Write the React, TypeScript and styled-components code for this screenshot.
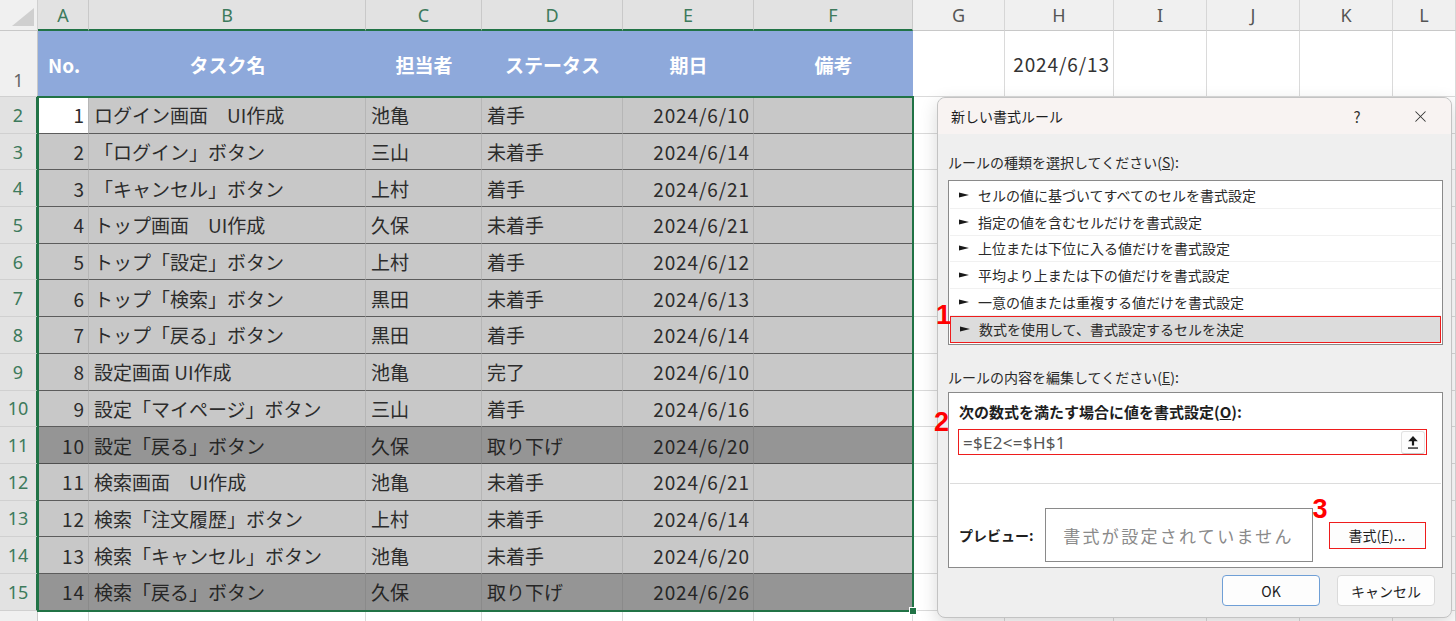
import React from 'react';
import styled, { createGlobalStyle, css } from 'styled-components';
import { X } from 'lucide-react';

const GlobalStyle = createGlobalStyle`
  html, body {
    margin: 0;
    padding: 0;
    background: #ffffff;
  }
  body {
    font-family: "Noto Sans CJK JP", "Noto Sans", sans-serif;
    color: #222;
  }
`;

const COLS = '38px 51px 277px 116px 141px 131px 159px 92px 109px 93px 93px 93px 1fr';
const LETTERS = ['A', 'B', 'C', 'D', 'E', 'F', 'G', 'H', 'I', 'J', 'K', 'L'];
const GREEN = '#217346';

type Task = {
  no: number;
  task: string;
  owner: string;
  status: string;
  due: string;
  dark?: boolean;
};

const tasks: Task[] = [
  { no: 1, task: 'ログイン画面　UI作成', owner: '池亀', status: '着手', due: '2024/6/10' },
  { no: 2, task: '「ログイン」ボタン', owner: '三山', status: '未着手', due: '2024/6/14' },
  { no: 3, task: '「キャンセル」ボタン', owner: '上村', status: '着手', due: '2024/6/21' },
  { no: 4, task: 'トップ画面　UI作成', owner: '久保', status: '未着手', due: '2024/6/21' },
  { no: 5, task: 'トップ「設定」ボタン', owner: '上村', status: '着手', due: '2024/6/12' },
  { no: 6, task: 'トップ「検索」ボタン', owner: '黒田', status: '未着手', due: '2024/6/13' },
  { no: 7, task: 'トップ「戻る」ボタン', owner: '黒田', status: '着手', due: '2024/6/14' },
  { no: 8, task: '設定画面 UI作成', owner: '池亀', status: '完了', due: '2024/6/10' },
  { no: 9, task: '設定「マイページ」ボタン', owner: '三山', status: '着手', due: '2024/6/16' },
  { no: 10, task: '設定「戻る」ボタン', owner: '久保', status: '取り下げ', due: '2024/6/20', dark: true },
  { no: 11, task: '検索画面　UI作成', owner: '池亀', status: '未着手', due: '2024/6/21' },
  { no: 12, task: '検索「注文履歴」ボタン', owner: '上村', status: '未着手', due: '2024/6/14' },
  { no: 13, task: '検索「キャンセル」ボタン', owner: '池亀', status: '未着手', due: '2024/6/20' },
  { no: 14, task: '検索「戻る」ボタン', owner: '久保', status: '取り下げ', due: '2024/6/26', dark: true },
];

const rules = [
  'セルの値に基づいてすべてのセルを書式設定',
  '指定の値を含むセルだけを書式設定',
  '上位または下位に入る値だけを書式設定',
  '平均より上または下の値だけを書式設定',
  '一意の値または重複する値だけを書式設定',
  '数式を使用して、書式設定するセルを決定',
];

/* ---------- sheet ---------- */

const Sheet = styled.div`
  position: relative;
  width: 1456px;
  height: 621px;
  overflow: hidden;
  background: #fff;
`;

const GridRow = styled.div<{ $h: number }>`
  display: grid;
  grid-template-columns: ${COLS};
  grid-template-rows: ${(p) => p.$h}px;
  height: ${(p) => p.$h}px;
`;

const Corner = styled.div`
  background: #f0f0f0;
  border-right: 1px solid #d0d0d0;
  border-bottom: 1px solid #c8c8c8;
  box-sizing: border-box;
  display: flex;
  align-items: flex-end;
  justify-content: flex-end;
  padding: 0 3px 4px 0;
`;

const ColHead = styled.div<{ $sel: boolean }>`
  display: flex;
  align-items: center;
  justify-content: center;
  box-sizing: border-box;
  font-family: "Noto Sans", sans-serif;
  font-size: 18px;
  background: ${(p) => (p.$sel ? '#e2e2e2' : '#f0f0f0')};
  color: ${(p) => (p.$sel ? '#3d7a5c' : '#555')};
  border-right: 1px solid ${(p) => (p.$sel ? '#c9c9c9' : '#d6d6d6')};
  border-bottom: ${(p) => (p.$sel ? `2px solid ${GREEN}` : '1px solid #c8c8c8')};
`;

const RowHead = styled.div<{ $sel: boolean; $bottom?: boolean }>`
  display: flex;
  justify-content: center;
  align-items: ${(p) => (p.$bottom ? 'flex-end' : 'center')};
  padding-bottom: ${(p) => (p.$bottom ? '4px' : '0')};
  box-sizing: border-box;
  font-family: "Noto Sans", sans-serif;
  font-size: 18px;
  background: ${(p) => (p.$sel ? '#e2e2e2' : '#f0f0f0')};
  color: ${(p) => (p.$sel ? '#3d7a5c' : '#666')};
  border-bottom: 1px solid #d0d0d0;
  border-right: ${(p) => (p.$sel ? `2px solid ${GREEN}` : '1px solid #c8c8c8')};
`;

type CellKind = 'title' | 'data' | 'dark' | 'active' | 'blank';

const Cell = styled.div<{ $kind: CellKind; $align?: 'left' | 'right' | 'center'; $num?: boolean }>`
  display: flex;
  align-items: center;
  box-sizing: border-box;
  overflow: hidden;
  white-space: nowrap;
  font-size: 19px;
  padding: 0 5px;
  justify-content: ${(p) =>
    p.$align === 'right' ? 'flex-end' : p.$align === 'center' ? 'center' : 'flex-start'};
  ${(p) =>
    p.$num &&
    css`
      letter-spacing: 0.9px;
      padding-right: 3px;
    `}
  ${(p) => {
    switch (p.$kind) {
      case 'title':
        return css`
          background: #8ea9db;
          color: #fff;
          font-weight: 700;
          padding: 0 10px;
        `;
      case 'data':
        return css`
          background: #c8c8c8;
          color: #2c2c2c;
          border-right: 1px solid #b6b6b6;
          border-bottom: 1px solid #5c5c5c;
        `;
      case 'dark':
        return css`
          background: #959595;
          color: #262626;
          border-right: 1px solid #8a8a8a;
          border-bottom: 1px solid #4f4f4f;
        `;
      case 'active':
        return css`
          background: #fff;
          color: #2c2c2c;
          border-right: 1px solid #b6b6b6;
          border-bottom: 1px solid #5c5c5c;
        `;
      default:
        return css`
          background: #fff;
          color: #333;
          border-right: 1px solid #dadada;
          border-bottom: 1px solid #dadada;
        `;
    }
  }}
`;

const SelectionFrame = styled.div`
  position: absolute;
  left: 37px;
  top: 96px;
  width: 877px;
  height: 516px;
  box-sizing: border-box;
  border: 2px solid ${GREEN};
  pointer-events: none;
`;

const FillHandle = styled.div`
  position: absolute;
  right: -5px;
  bottom: -5px;
  width: 6px;
  height: 6px;
  background: ${GREEN};
  border: 1px solid #fff;
`;

/* ---------- dialog ---------- */

const Dialog = styled.div`
  position: absolute;
  left: 937px;
  top: 97px;
  width: 515px;
  height: 521px;
  box-sizing: border-box;
  background: #efefef;
  border: 1px solid #c3c3c3;
  border-radius: 8px;
  box-shadow: 0 6px 18px rgba(0, 0, 0, 0.16);
  display: flex;
  flex-direction: column;
`;

const TitleBar = styled.div`
  height: 36px;
  flex: none;
  display: flex;
  align-items: center;
  padding: 0 0 0 13px;
  background: #f8f3f2;
  border-radius: 8px 8px 0 0;
  font-size: 14px;
  color: #1e1e1e;
`;

const TitleText = styled.div`
  flex: 1;
`;

const TitleButton = styled.div<{ $w: number }>`
  width: ${(p) => p.$w}px;
  height: 36px;
  display: flex;
  align-items: center;
  justify-content: center;
  font-size: 15px;
  color: #333;
`;

const Body = styled.div`
  flex: 1;
  display: flex;
  flex-direction: column;
  padding: 0 8px 0 10px;
  position: relative;
`;

const SectionLabel = styled.div<{ $top: number }>`
  margin-top: ${(p) => p.$top}px;
  height: 20px;
  line-height: 20px;
  font-size: 14px;
  color: #2a2a2a;
`;

const U = styled.span`
  text-decoration: underline;
`;

const ListBox = styled.div`
  margin-top: 8px;
  height: 165px;
  box-sizing: border-box;
  background: #fff;
  border: 1px solid #8a8a8a;
  padding: 1px 1px;
  display: flex;
  flex-direction: column;
`;

const ListItem = styled.div<{ $sel?: boolean }>`
  height: 26.8px;
  box-sizing: border-box;
  display: flex;
  align-items: center;
  padding-left: 9px;
  font-size: 14px;
  color: #2a2a2a;
  border-bottom: 1px solid #f1f1f1;
  ${(p) =>
    p.$sel &&
    css`
      background: #dcdcdc;
      border: 1px solid #ee1c1c;
    `}
`;

const Pointer = styled.span`
  width: 19px;
  display: flex;
  align-items: center;
`;

const EditPanel = styled.div`
  margin-top: 5px;
  height: 176px;
  box-sizing: border-box;
  background: #fff;
  border: 1px solid #8a8a8a;
  display: flex;
  flex-direction: column;
`;

const FormulaSection = styled.div`
  height: 91px;
  box-sizing: border-box;
  padding: 9px 14px 0 8px;
  margin: 0 1px;
  border-bottom: 1px solid #dcdcdc;
`;

const BoldLabel = styled.div<{ $size: number }>`
  font-size: ${(p) => p.$size}px;
  font-weight: 700;
  color: #1e1e1e;
  line-height: 20px;
  padding-left: 1px;
  white-space: nowrap;
`;

const FormulaInput = styled.div`
  margin-top: 7px;
  height: 26px;
  box-sizing: border-box;
  border: 1px solid #ee1c1c;
  display: flex;
  align-items: center;
  padding: 0 1px 0 4px;
  font-family: "Noto Sans", sans-serif;
  font-size: 17px;
  color: #555;
`;

const FormulaText = styled.div`
  flex: 1;
  letter-spacing: 0.3px;
`;

const CollapseButton = styled.div`
  width: 24px;
  height: 23px;
  box-sizing: border-box;
  display: flex;
  align-items: center;
  justify-content: center;
  background: #fdfdfd;
  border: 1px solid #e2e2e2;
  border-bottom-color: #c8c8c8;
  border-radius: 3px;
`;

const PreviewSection = styled.div`
  flex: 1;
  display: flex;
  align-items: flex-end;
  padding: 0 0 5px 9px;
`;

const PreviewRow = styled.div`
  display: flex;
  align-items: center;
`;

const PreviewBox = styled.div`
  margin-left: 11px;
  width: 268px;
  height: 54px;
  box-sizing: border-box;
  border: 1px solid #8a8a8a;
  display: flex;
  align-items: center;
  justify-content: center;
  font-size: 17px;
  letter-spacing: 2.3px;
  color: #8a8a8a;
`;

const FormatWrap = styled.div`
  position: relative;
  margin-left: 16px;
`;

const PushButton = styled.div<{ $w: number; $h: number; $tone?: 'red' | 'blue' | 'plain' }>`
  width: ${(p) => p.$w}px;
  height: ${(p) => p.$h}px;
  box-sizing: border-box;
  display: flex;
  align-items: center;
  justify-content: center;
  font-size: 14px;
  color: #1e1e1e;
  background: #fdfdfd;
  border-radius: ${(p) => (p.$tone === 'red' ? '0' : '4px')};
  border: 1px solid
    ${(p) => (p.$tone === 'red' ? '#ee1c1c' : p.$tone === 'blue' ? '#6f9fd6' : '#dadada')};
`;

const Footer = styled.div`
  margin-top: 7px;
  display: flex;
  justify-content: flex-end;
  gap: 17px;
  padding-right: 8px;
`;

const Marker = styled.div<{ $left: number; $top: number }>`
  position: absolute;
  left: ${(p) => p.$left}px;
  top: ${(p) => p.$top}px;
  font-family: "Liberation Sans", Arial, sans-serif;
  font-weight: 700;
  font-size: 27px;
  color: #ff0000;
  line-height: 1;
`;

const UploadIcon = () => (
  <svg width="12" height="15" viewBox="0 0 12 15">
    <path d="M6 1 L10.8 6.2 H7.1 V10.5 H4.9 V6.2 H1.2 Z" fill="#1a1a1a" />
    <rect x="1" y="12.4" width="10" height="1.3" fill="#1a1a1a" />
  </svg>
);

const PointerIcon = () => (
  <svg width="10" height="8" viewBox="0 0 10 8">
    <polygon points="0,1.5 10,4 0,6.5" fill="#1a1a1a" />
    <rect x="0" y="3.3" width="3" height="1.4" fill="#1a1a1a" />
  </svg>
);

const CornerTriangle = () => (
  <svg width="26" height="18" viewBox="0 0 26 18">
    <polygon points="26,0 26,18 4,18" fill="#cfcfcf" />
  </svg>
);

/* ---------- app ---------- */

const App: React.FC = () => {
  const blanks = (row: number) =>
    LETTERS.slice(6).map((l) => <Cell key={`${l}${row}`} $kind="blank" />);

  return (
    <>
      <GlobalStyle />
      <Sheet>
        <GridRow $h={31}>
          <Corner>
            <CornerTriangle />
          </Corner>
          {LETTERS.map((l, i) => (
            <ColHead key={l} $sel={i < 6}>
              {l}
            </ColHead>
          ))}
          <ColHead $sel={false} />
        </GridRow>

        <GridRow $h={66}>
          <RowHead $sel={false} $bottom>
            1
          </RowHead>
          <Cell $kind="title">No.</Cell>
          <Cell $kind="title" $align="center">タスク名</Cell>
          <Cell $kind="title" $align="center">担当者</Cell>
          <Cell $kind="title" $align="center">ステータス</Cell>
          <Cell $kind="title" $align="center">期日</Cell>
          <Cell $kind="title" $align="center">備考</Cell>
          <Cell $kind="blank" />
          <Cell $kind="blank" $align="right" $num>
            2024/6/13
          </Cell>
          <Cell $kind="blank" />
          <Cell $kind="blank" />
          <Cell $kind="blank" />
          <Cell $kind="blank" />
          <Cell $kind="blank" />
        </GridRow>

        {tasks.map((t, i) => {
          const kind: CellKind = t.dark ? 'dark' : 'data';
          return (
            <GridRow key={t.no} $h={36.7}>
              <RowHead $sel>{i + 2}</RowHead>
              <Cell $kind={i === 0 ? 'active' : kind} $align="right" $num>
                {t.no}
              </Cell>
              <Cell $kind={kind}>{t.task}</Cell>
              <Cell $kind={kind}>{t.owner}</Cell>
              <Cell $kind={kind}>{t.status}</Cell>
              <Cell $kind={kind} $align="right" $num>
                {t.due}
              </Cell>
              <Cell $kind={kind} />
              {blanks(i + 2)}
              <Cell $kind="blank" />
            </GridRow>
          );
        })}

        <GridRow $h={37}>
          <RowHead $sel={false} />
          {LETTERS.map((l) => (
            <Cell key={l} $kind="blank" />
          ))}
          <Cell $kind="blank" />
        </GridRow>

        <SelectionFrame>
          <FillHandle />
        </SelectionFrame>

        <Dialog>
          <TitleBar>
            <TitleText>新しい書式ルール</TitleText>
            <TitleButton $w={64}>?</TitleButton>
            <TitleButton $w={62}>
              <X size={19} strokeWidth={1.3} color="#333" />
            </TitleButton>
          </TitleBar>
          <Body>
            <SectionLabel $top={18}>
              ルールの種類を選択してください(<U>S</U>):
            </SectionLabel>
            <ListBox>
              {rules.map((r, i) => (
                <ListItem key={r} $sel={i === rules.length - 1}>
                  <Pointer>
                    <PointerIcon />
                  </Pointer>
                  {r}
                </ListItem>
              ))}
            </ListBox>
            <SectionLabel $top={22}>
              ルールの内容を編集してください(<U>E</U>):
            </SectionLabel>
            <EditPanel>
              <FormulaSection>
                <BoldLabel $size={15}>
                  次の数式を満たす場合に値を書式設定(<U>O</U>):
                </BoldLabel>
                <FormulaInput>
                  <FormulaText>=$E2&lt;=$H$1</FormulaText>
                  <CollapseButton>
                    <UploadIcon />
                  </CollapseButton>
                </FormulaInput>
              </FormulaSection>
              <PreviewSection>
                <PreviewRow>
                  <BoldLabel $size={14}>プレビュー:</BoldLabel>
                  <PreviewBox>書式が設定されていません</PreviewBox>
                  <FormatWrap>
                    <Marker $left={-16} $top={-26}>3</Marker>
                    <PushButton $w={97} $h={27} $tone="red">
                      書式(<U>F</U>)...
                    </PushButton>
                  </FormatWrap>
                </PreviewRow>
              </PreviewSection>
            </EditPanel>
            <Footer>
              <PushButton $w={98} $h={31} $tone="blue">
                OK
              </PushButton>
              <PushButton $w={98} $h={31} $tone="plain">
                キャンセル
              </PushButton>
            </Footer>
            <Marker $left={-2} $top={168}>1</Marker>
            <Marker $left={-4} $top={275}>2</Marker>
          </Body>
        </Dialog>
      </Sheet>
    </>
  );
};

export default App;
